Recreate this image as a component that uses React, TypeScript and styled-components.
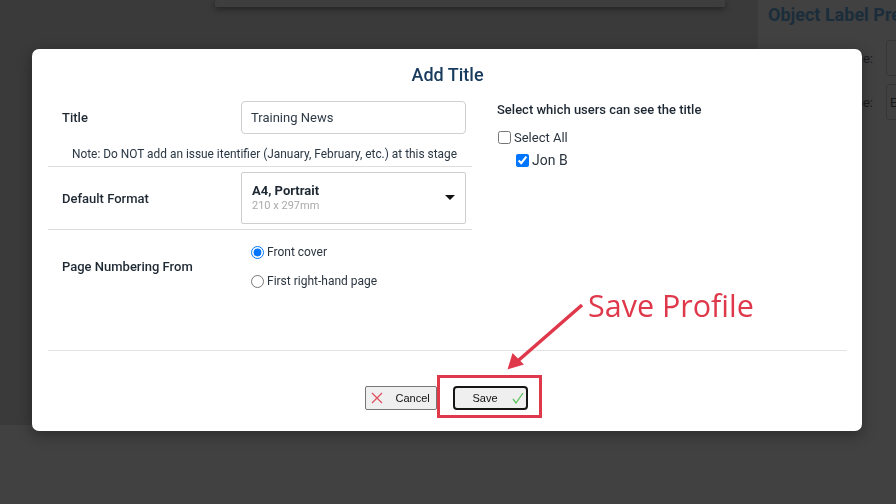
import React from 'react';
import styled, {createGlobalStyle} from 'styled-components';

const GlobalStyle = createGlobalStyle`
  html, body {
    margin: 0;
    padding: 0;
    background: #414141;
    font-family: Roboto, "Liberation Sans", Arial, sans-serif;
  }
`

const Page = styled.div`
  display: flex;
  width: 896px;
  height: 504px;
  overflow: hidden;
`

const Workspace = styled.div`
  flex: 0 0 758px;
  height: 425px;
  background: #3a3a3a;
`

const TopCard = styled.div`
  margin-left: 215px;
  width: 510px;
  height: 7px;
  background: #3e3e3e;
  box-shadow: 0 2px 6px rgba(0, 0, 0, 0.45);
`

const SidePanel = styled.div`
  flex: 0 0 138px;
  min-width: 0;
  overflow: hidden;
  background: #414141;
  padding: 4px 0 0 10px;
  box-sizing: border-box;
`

const SideHeading = styled.div`
  font-size: 18px;
  line-height: 21px;
  font-weight: 700;
  color: #1b2d3b;
  white-space: nowrap;
`

const SideRow = styled.div<{first?: boolean}>`
  display: flex;
  align-items: center;
  gap: 13px;
  margin-top: ${({first}) => first ? '15px' : '8px'};
  font-size: 13px;
  color: #1a1a1a;
`

const SideLabel = styled.span`
  flex: 0 0 105px;
  text-align: right;
`

const SideInput = styled.div`
  flex: 0 0 40px;
  height: 36px;
  border: 1px solid #363636;
  border-radius: 4px;
  box-sizing: border-box;
  padding-left: 3px;
  display: flex;
  align-items: center;
`

const Overlay = styled.div`
  position: fixed;
  inset: 0;
  display: flex;
  justify-content: center;
  align-items: flex-start;
  padding: 49px 2px 0 0;
`

const Modal = styled.div`
  position: relative;
  width: 830px;
  background: #fff;
  border-radius: 7px;
  padding: 0 15px 0 16px;
  box-sizing: border-box;
  box-shadow: 0 4px 14px rgba(0, 0, 0, 0.35);
`

const Header = styled.h2`
  margin: 0;
  height: 44px;
  padding-top: 14px;
  box-sizing: border-box;
  text-align: center;
  font-size: 18px;
  line-height: 24px;
  font-weight: 500;
  color: #183a5c;
`

const Body = styled.div`
  display: flex;
  height: 257px;
`

const LeftCol = styled.div`
  width: 424px;
  padding-top: 6px;
`

const RightCol = styled.div`
  flex: 1;
  padding: 9px 0 0 25px;
`

const FormRow = styled.div<{pad?: string, last?: boolean}>`
  display: grid;
  grid-template-columns: 193px 225px;
  align-items: center;
  padding: ${({pad}) => pad || '0'};
  border-bottom: ${({last}) => last ? 'none' : '1px solid #dedede'};
`

const Label = styled.label`
  padding-left: 14px;
  font-size: 13px;
  font-weight: 500;
  color: #1e2833;
`

const TextInput = styled.div`
  height: 33px;
  border: 1px solid #cfcfcf;
  border-radius: 4px;
  box-sizing: border-box;
  padding-left: 9px;
  display: flex;
  align-items: center;
  font-size: 13px;
  color: #2d3a46;
`

const Note = styled.div`
  grid-column: 1 / 3;
  margin-top: 12px;
  padding-bottom: 4px;
  padding-left: 15px;
  text-align: center;
  font-size: 11.9px;
  line-height: 16px;
  color: #2a3744;
  white-space: nowrap;
`

const SelectBox = styled.div`
  position: relative;
  height: 52px;
  border: 1px solid #cfcfcf;
  border-radius: 2px;
  box-sizing: border-box;
  padding: 9px 0 0 10px;
`

const SelectMain = styled.div`
  font-size: 13px;
  font-weight: 700;
  color: #1e2833;
  line-height: 17px;
`

const SelectSub = styled.div`
  font-size: 11px;
  color: #a9a9a9;
  line-height: 14px;
`

const Caret = styled.span`
  position: absolute;
  right: 10px;
  top: 22px;
  width: 0;
  height: 0;
  border-left: 5px solid transparent;
  border-right: 5px solid transparent;
  border-top: 5px solid #111;
`

const RadioGroup = styled.div`
  display: flex;
  flex-direction: column;
  gap: 9px;
  padding-left: 9px;
`

const Option = styled.label<{size?: number, indent?: number}>`
  display: flex;
  align-items: center;
  height: 20px;
  font-size: ${({size}) => size || 12}px;
  color: #2b3540;
  margin-left: ${({indent}) => indent || 0}px;

  input {
    margin: 0 3px 0 1px;
    width: 13px;
    height: 13px;
  }
`

const UsersHeading = styled.div`
  font-size: 13px;
  font-weight: 500;
  line-height: 16px;
  color: #1e2833;
  margin-bottom: 9px;
`

const UserList = styled.div`
  display: flex;
  flex-direction: column;
  gap: 3px;
`

const Footer = styled.div`
  border-top: 1px solid #e3e3e3;
  display: flex;
  justify-content: center;
  gap: 16px;
  padding: 35px 3px 21px 0;
`

const Button = styled.button<{primary?: boolean}>`
  display: flex;
  align-items: center;
  height: 24px;
  box-sizing: border-box;
  background: #efefef;
  border: ${({primary}) => primary ? '2px solid #151515' : '1px solid #767676'};
  border-radius: ${({primary}) => primary ? '4px' : '2px'};
  font-family: "Liberation Sans", Arial, sans-serif;
  font-size: 11px;
  color: #111;
  padding: 0;
  width: ${({primary}) => primary ? '75px' : '72px'};
`

const Highlight = styled.div`
  position: absolute;
  left: 405px;
  top: 326px;
  width: 105px;
  height: 43px;
  border: 3px solid #e0384b;
  box-sizing: border-box;
  pointer-events: none;
`

const Callout = styled.div`
  position: absolute;
  left: 556px;
  top: 236px;
  font-family: "Open Sans", "Noto Sans", sans-serif;
  font-size: 30.5px;
  line-height: 40px;
  color: #e0384b;
  white-space: nowrap;
`

const Arrow = styled.svg`
  position: absolute;
  left: 439px;
  top: 249px;
  overflow: visible;
`

export default function App() {
    return (
        <>
            <GlobalStyle/>
            <Page>
                <Workspace>
                    <TopCard/>
                </Workspace>
                <SidePanel>
                    <SideHeading>Object Label Preferences</SideHeading>
                    <SideRow first><SideLabel>Title:</SideLabel><SideInput/></SideRow>
                    <SideRow><SideLabel>Type:</SideLabel><SideInput>E</SideInput></SideRow>
                </SidePanel>
            </Page>
            <Overlay>
                <Modal>
                    <Header>Add Title</Header>
                    <Body>
                        <LeftCol>
                            <FormRow pad="2px 0 0 0">
                                <Label>Title</Label>
                                <TextInput>Training News</TextInput>
                                <Note>Note: Do NOT add an issue itentifier (January, February, etc.) at this stage</Note>
                            </FormRow>
                            <FormRow pad="5px 0 5px 0">
                                <Label>Default Format</Label>
                                <SelectBox>
                                    <SelectMain>A4, Portrait</SelectMain>
                                    <SelectSub>210 x 297mm</SelectSub>
                                    <Caret/>
                                </SelectBox>
                            </FormRow>
                            <FormRow pad="12px 0 10px 0" last>
                                <Label>Page Numbering From</Label>
                                <RadioGroup>
                                    <Option><input type="radio" name="pn" defaultChecked/>Front cover</Option>
                                    <Option><input type="radio" name="pn"/>First right-hand page</Option>
                                </RadioGroup>
                            </FormRow>
                        </LeftCol>
                        <RightCol>
                            <UsersHeading>Select which users can see the title</UsersHeading>
                            <UserList>
                                <Option size={13}><input type="checkbox"/>Select All</Option>
                                <Option size={14} indent={18}><input type="checkbox" defaultChecked/>Jon B</Option>
                            </UserList>
                        </RightCol>
                    </Body>
                    <Footer>
                        <Button>
                            <svg width="12" height="12" viewBox="0 0 12 12" style={{margin: '0 13px 0 5px'}}>
                                <path d="M1 1 L11 11 M11 1 L1 11" stroke="#e0505e" strokeWidth="1.3" fill="none"/>
                            </svg>
                            Cancel
                        </Button>
                        <Button primary>
                            <span style={{marginLeft: 18}}>Save</span>
                            <svg width="12" height="12" viewBox="0 0 12 12" style={{marginLeft: 14}}>
                                <path d="M1 7 L4 11 L11 1" stroke="#5cc45c" strokeWidth="1.3" fill="none"/>
                            </svg>
                        </Button>
                    </Footer>
                    <Highlight/>
                    <Arrow width="120" height="80">
                        <path d="M111 7 L41 68" stroke="#e0384b" strokeWidth="3.5" fill="none"/>
                        <path d="M38 70 L42 57 L51 66 Z" fill="#e0384b" stroke="#e0384b" strokeWidth="2"/>
                    </Arrow>
                    <Callout>Save Profile</Callout>
                </Modal>
            </Overlay>
        </>
    );
}
